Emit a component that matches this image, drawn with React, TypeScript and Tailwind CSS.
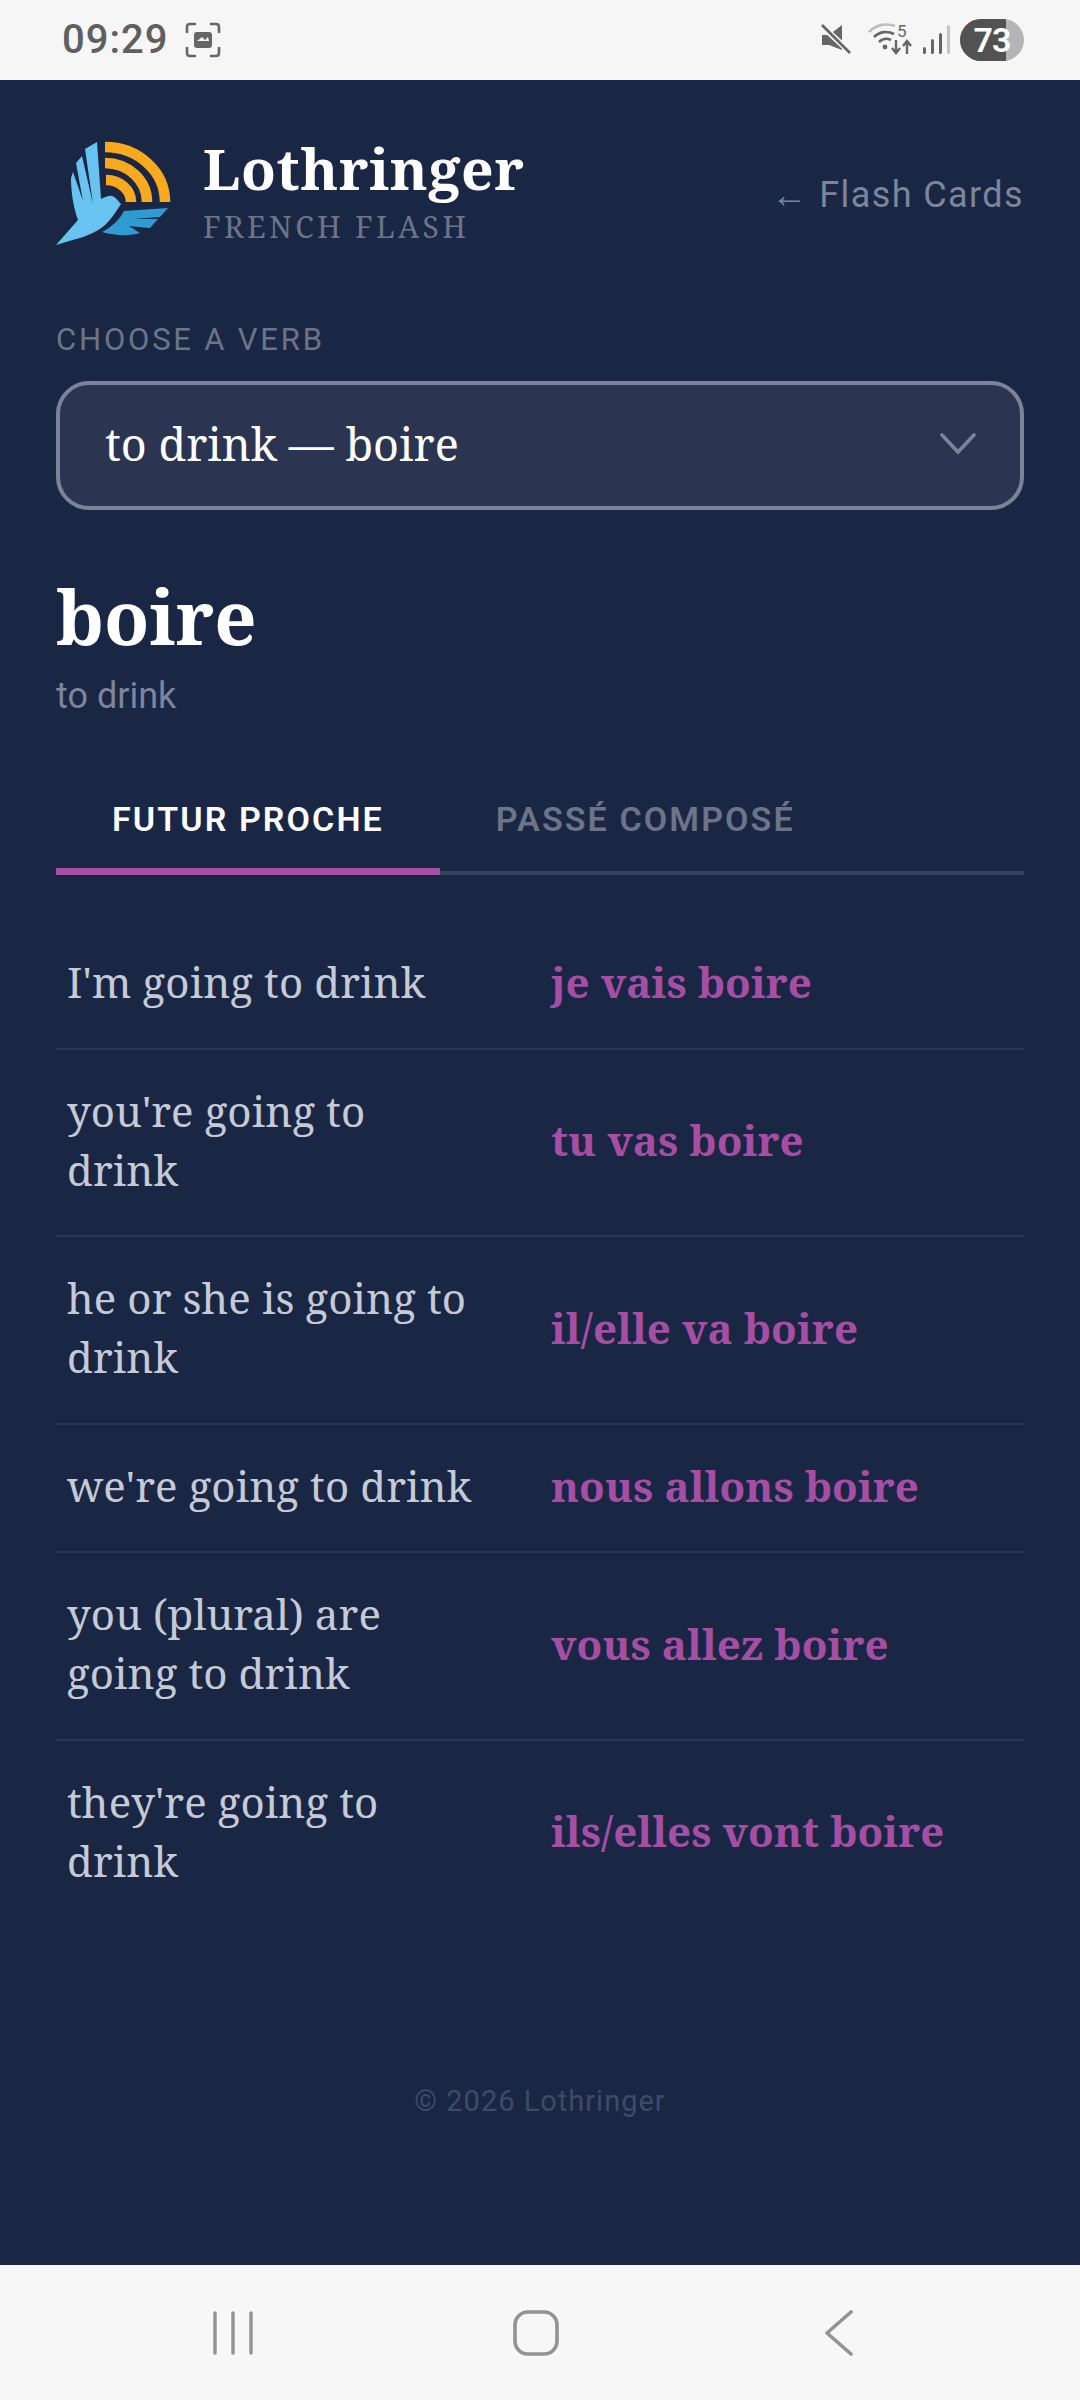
import React, { useState } from 'react';

const SERIF = "font-['Noto_Serif','DejaVu_Serif',serif]";

const ROWS = [
    { en: "I'm going to drink", fr: 'je vais boire' },
    { en: "you're going to drink", fr: 'tu vas boire' },
    { en: 'he or she is going to drink', fr: 'il/elle va boire' },
    { en: "we're going to drink", fr: 'nous allons boire' },
    { en: 'you (plural) are going to drink', fr: 'vous allez boire' },
    { en: "they're going to drink", fr: 'ils/elles vont boire' },
];

function Logo() {
    return (
        <svg width="150" height="140" viewBox="0 0 150 140" className="-ml-[16px] -my-[20px] shrink-0">
            {/* signal arcs */}
            <g fill="none" stroke="#f9a91e" strokeWidth="10.5">
                <path d="M65 26 A60 55 0 0 1 125 81" />
                <path d="M65 42 A42 39 0 0 1 107 81" />
                <path d="M66 59 A25 22 0 0 1 91 81" />
            </g>
            {/* bird */}
            <path
                d="M16 124 L38 99 C33 85 31 70 31 57 L33 51 L43 80 L36 42 L42 35 L53 83 L45 28 L57 21 L61 78 C64 77 68 74 72 75 C76 76 78 80 81 83 C76 90 72 98 64 105 C50 116 34 118 16 124 Z"
                fill="#69c3f0"
            />
            <path
                d="M128 87 L84 90 C80 98 72 106 62 111 C76 115 90 115 100 112 L89 105 L110 107 L118 98 L93 98 L120 96 Z"
                fill="#2f9bd3"
            />
        </svg>
    );
}

function StatusBar() {
    return (
        <div className="h-[80px] bg-[#f6f6f6] flex items-center justify-between pl-[62px] pr-[56px] shrink-0">
            <div className="flex items-center gap-[17px]">
                <span className="font-['Roboto',sans-serif] font-medium text-[40px] leading-none tracking-[1px] text-[#5f5f5f]">09:29</span>
                <svg width="36" height="36" viewBox="0 0 36 36" fill="none">
                    <path d="M2 10 V5 Q2 2 5 2 H10 M26 2 H31 Q34 2 34 5 V10 M34 26 V31 Q34 34 31 34 H26 M10 34 H5 Q2 34 2 31 V26" stroke="#666" strokeWidth="2.6" strokeLinecap="round" />
                    <path d="M9 13 Q9 10 12 10 H24 Q27 10 27 13 V23 Q27 26 24 26 H12 Q9 26 9 23 Z" fill="#666" />
                    <path d="M12 19 L17 15 L20 18 L23 15 L24 19 Z" fill="#f6f6f6" />
                </svg>
            </div>
            <div className="flex items-center">
                <svg width="32" height="32" viewBox="0 0 32 32" className="mr-[16px]">
                    <path d="M2 11 H9 L22 1 V26 L9 21 H2 Z" fill="#666" />
                    <path d="M2 2 L31 29" stroke="#f6f6f6" strokeWidth="6" />
                    <path d="M2 1 L30 29" stroke="#666" strokeWidth="2.6" />
                </svg>
                <svg width="46" height="34" viewBox="0 0 46 34" className="mr-[8px] overflow-visible">
                    <path d="M1 9 C9 1 19 0 27 3" fill="none" stroke="#bdbdbd" strokeWidth="2.6" />
                    <path d="M6 14 C12 8 20 8 26 11" fill="none" stroke="#666" strokeWidth="2.6" />
                    <path d="M11 19 C15 15 19 15 23 17" fill="none" stroke="#666" strokeWidth="2.6" />
                    <circle cx="17" cy="24" r="2.4" fill="#666" />
                    <path d="M28 17 V29 M24 25 L28 30 L32 25" fill="none" stroke="#666" strokeWidth="2.4" />
                    <path d="M39 31 V19 M35 23 L39 18 L43 23" fill="none" stroke="#666" strokeWidth="2.4" />
                    <text x="29" y="14" fontSize="17" fill="#666" fontFamily="Roboto">5</text>
                </svg>
                <svg width="28" height="30" viewBox="0 0 28 30" className="mr-[10px]">
                    <rect x="1" y="22" width="3" height="7" rx="1.5" fill="#666" />
                    <rect x="9" y="14" width="3" height="15" rx="1.5" fill="#666" />
                    <rect x="17" y="8" width="3" height="21" rx="1.5" fill="#666" />
                    <rect x="25" y="0" width="3" height="29" rx="1.5" fill="#c4c4c4" />
                </svg>
                <div className="relative w-[64px] h-[42px] rounded-full overflow-hidden bg-[#b5b5b5]">
                    <div className="absolute inset-y-0 left-0 w-[46px] bg-[#525252]" />
                    <span className="absolute inset-0 flex items-center justify-center font-['Roboto',sans-serif] font-semibold text-[34px] tracking-tight text-white">73</span>
                </div>
            </div>
        </div>
    );
}

function NavBar() {
    return (
        <div className="h-[135px] bg-[#f7f7f7] flex items-center pl-[82px] shrink-0">
            <div className="grid grid-cols-3 w-[908px] items-center justify-items-center">
                <svg width="42" height="44" viewBox="0 0 42 44" fill="none" stroke="#939393" strokeWidth="3.4" strokeLinecap="round">
                    <path d="M3 2 V42 M21 2 V42 M39 2 V42" />
                </svg>
                <svg width="46" height="46" viewBox="0 0 46 46" fill="none" stroke="#939393" strokeWidth="3.6">
                    <rect x="2" y="2" width="42" height="42" rx="13" />
                </svg>
                <svg width="30" height="46" viewBox="0 0 30 46" fill="none" stroke="#939393" strokeWidth="3.6" strokeLinecap="round" strokeLinejoin="round">
                    <path d="M27 2 L3 23 L27 44" />
                </svg>
            </div>
        </div>
    );
}

export default function App() {
    const [tab, setTab] = useState<'futur' | 'passe'>('futur');

    return (
        <div className="w-[1080px] h-[2400px] flex flex-col overflow-hidden">
            <StatusBar />

            <main className="flex-1 bg-[#1a2744] px-[56px] flex flex-col">
                {/* Header */}
                <header className="flex items-center justify-between pt-[55px]">
                    <div className="flex items-center">
                        <Logo />
                        <div className="ml-[13px]">
                            <div className={`${SERIF} font-bold text-[57px] leading-[66px] tracking-[0.6px] text-white`}>Lothringer</div>
                            <div className={`${SERIF} mt-[6px] text-[30px] leading-[40px] tracking-[3.3px] text-[#6b7488]`}>FRENCH FLASH</div>
                        </div>
                    </div>
                    <a className="pt-[8px] font-['Roboto',sans-serif] text-[36px] tracking-[1.4px] text-[#7c859a]">← Flash Cards</a>
                </header>

                {/* Verb picker */}
                <label className="block mt-[74px] font-['Roboto',sans-serif] text-[31px] leading-[38px] tracking-[2.8px] text-[#6b7488]">CHOOSE A VERB</label>
                <div className="relative mt-[22px]">
                    <select className={`${SERIF} appearance-none w-full h-[129px] rounded-[33px] border-[4px] border-[#7c8498] bg-[#2b3552] px-[45px] pb-[3px] text-[45px] text-white outline-none`}>
                        <option>to drink — boire</option>
                    </select>
                    <svg width="36" height="22" viewBox="0 0 36 22" fill="none" stroke="#7c8498" strokeWidth="3.6" strokeLinecap="round" className="absolute right-[48px] top-[52px]">
                        <path d="M2 2 L18 19 L34 2" />
                    </svg>
                </div>

                {/* Verb heading */}
                <h1 className={`${SERIF} font-bold text-[74px] leading-[90px] text-white mt-[62px]`}>boire</h1>
                <p className="font-['Roboto',sans-serif] text-[36px] leading-[44px] text-[#7c859a] mt-[12px]">to drink</p>

                {/* Tabs */}
                <div className="flex border-b-[4px] border-[#38425c] mt-[50px]">
                    <button onClick={() => setTab('futur')} className={`h-[107px] -mb-[4px] px-[56px] pt-[2px] border-b-[7px] font-['Roboto',sans-serif] font-semibold text-[34px] tracking-[2.1px] ${tab === 'futur' ? 'border-[#a64ea3] text-white' : 'border-transparent text-[#6b7488]'}`}>FUTUR PROCHE</button>
                    <button onClick={() => setTab('passe')} className={`h-[107px] -mb-[4px] px-[56px] pt-[2px] border-b-[7px] font-['Roboto',sans-serif] font-semibold text-[34px] tracking-[2.1px] ${tab === 'passe' ? 'border-[#a64ea3] text-white' : 'border-transparent text-[#6b7488]'}`}>PASSÉ COMPOSÉ</button>
                </div>

                {/* Conjugations */}
                <div className="mt-[46px]">
                    {ROWS.map((row, idx) => (
                        <div key={idx} className={`grid grid-cols-2 items-center pt-[31px] pb-[36.5px] ${idx < ROWS.length - 1 ? 'border-b-[2px] border-[#2a3550]' : ''}`}>
                            <div className={`${SERIF} pl-[11px] pr-[60px] text-[42px] leading-[59px] tracking-[0.09px] text-[#c5cad6]`}>{row.en}</div>
                            <div className={`${SERIF} pl-[11px] font-bold text-[42px] leading-[59px] tracking-[0.09px] text-[#a64ea3]`}>{row.fr}</div>
                        </div>
                    ))}
                </div>

                <footer className="mt-[154px] text-center font-['Roboto',sans-serif] text-[29px] tracking-[1px] text-[#3f4a64]">© 2026 Lothringer</footer>
            </main>

            <NavBar />
        </div>
    );
}
